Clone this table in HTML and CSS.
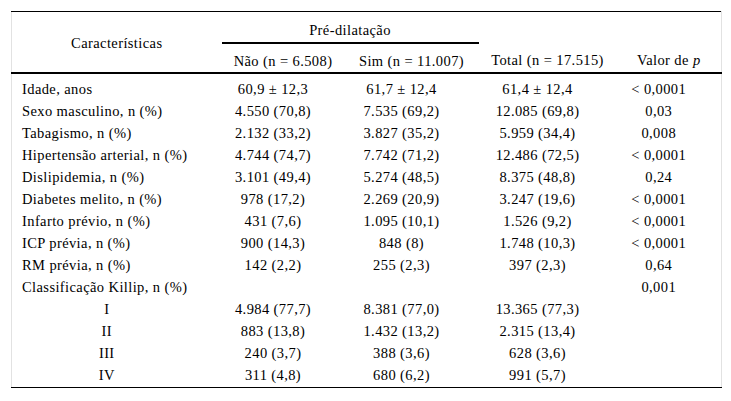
FILE: index.html
```html
<!DOCTYPE html>
<html lang="pt">
<head>
<meta charset="utf-8">
<title>Tabela</title>
<link rel="stylesheet" href="styles.css">
</head>
<body>
<table class="tbl">
  <colgroup>
    <col class="c1"><col class="c2"><col class="c3"><col class="c4"><col class="c5">
  </colgroup>
  <thead>
    <tr class="h1">
      <th rowspan="2" class="char">Características</th>
      <th colspan="2" class="group">Pré-dilatação</th>
      <th></th>
      <th></th>
    </tr>
    <tr class="h2">
      <th>Não (n = 6.508)</th>
      <th>Sim (n = 11.007)</th>
      <th>Total (n = 17.515)</th>
      <th>Valor de <i>p</i></th>
    </tr>
  </thead>
  <tbody>
    <tr><td class="lbl">Idade, anos</td><td>60,9 ± 12,3</td><td>61,7 ± 12,4</td><td>61,4 ± 12,4</td><td>&lt; 0,0001</td></tr>
    <tr><td class="lbl">Sexo masculino, n (%)</td><td>4.550 (70,8)</td><td>7.535 (69,2)</td><td>12.085 (69,8)</td><td>0,03</td></tr>
    <tr><td class="lbl">Tabagismo, n (%)</td><td>2.132 (33,2)</td><td>3.827 (35,2)</td><td>5.959 (34,4)</td><td>0,008</td></tr>
    <tr><td class="lbl">Hipertensão arterial, n (%)</td><td>4.744 (74,7)</td><td>7.742 (71,2)</td><td>12.486 (72,5)</td><td>&lt; 0,0001</td></tr>
    <tr><td class="lbl">Dislipidemia, n (%)</td><td>3.101 (49,4)</td><td>5.274 (48,5)</td><td>8.375 (48,8)</td><td>0,24</td></tr>
    <tr><td class="lbl">Diabetes melito, n (%)</td><td>978 (17,2)</td><td>2.269 (20,9)</td><td>3.247 (19,6)</td><td>&lt; 0,0001</td></tr>
    <tr><td class="lbl">Infarto prévio, n (%)</td><td>431 (7,6)</td><td>1.095 (10,1)</td><td>1.526 (9,2)</td><td>&lt; 0,0001</td></tr>
    <tr><td class="lbl">ICP prévia, n (%)</td><td>900 (14,3)</td><td>848 (8)</td><td>1.748 (10,3)</td><td>&lt; 0,0001</td></tr>
    <tr><td class="lbl">RM prévia, n (%)</td><td>142 (2,2)</td><td>255 (2,3)</td><td>397 (2,3)</td><td>0,64</td></tr>
    <tr><td class="lbl">Classificação Killip, n (%)</td><td></td><td></td><td></td><td>0,001</td></tr>
    <tr><td>I</td><td>4.984 (77,7)</td><td>8.381 (77,0)</td><td>13.365 (77,3)</td><td></td></tr>
    <tr><td>II</td><td>883 (13,8)</td><td>1.432 (13,2)</td><td>2.315 (13,4)</td><td></td></tr>
    <tr><td>III</td><td>240 (3,7)</td><td>388 (3,6)</td><td>628 (3,6)</td><td></td></tr>
    <tr class="last"><td>IV</td><td>311 (4,8)</td><td>680 (6,2)</td><td>991 (5,7)</td><td></td></tr>
  </tbody>
</table>
</body>
</html>
```
FILE: styles.css
```css
html, body {
  margin: 0;
  padding: 0;
  background: #fff;
}
body {
  padding: 11px 0 0 11px;
}
.tbl {
  width: 710px;
  table-layout: fixed;
  border-collapse: collapse;
  border-top: 1px solid #000;
  border-bottom: 1px solid #000;
  border-left: 1px solid #e2e2e2;
  border-right: 1px solid #e2e2e2;
  font-family: "Liberation Serif", "Times New Roman", serif;
  font-size: 14.5px;
  line-height: 14px;
  letter-spacing: 0.4px;
  color: #000;
}
.c1 { width: 210px; }
.c2 { width: 123px; }
.c3 { width: 134px; }
.c4 { width: 138px; }
.c5 { width: 105px; }
.tbl th {
  font-weight: normal;
  text-align: center;
  vertical-align: top;
}
.tbl .h1 th {
  padding: 11px 0 5px 0;
}
.tbl .h1 th.char {
  vertical-align: middle;
  padding: 2px 0 0 0;
}
.tbl .h2 th {
  padding: 10px 0 4px 0;
  border-bottom: 2px solid #000;
}
.tbl .char,
.tbl .group {
  border-bottom: 2px solid #000;
}
.tbl td {
  padding: 8px 20px 0 0;
  text-align: center;
  vertical-align: top;
  white-space: nowrap;
}
.tbl td.lbl {
  text-align: left;
  padding: 8px 0 0 10px;
}
.tbl .last td {
  padding-bottom: 5px;
}
```
